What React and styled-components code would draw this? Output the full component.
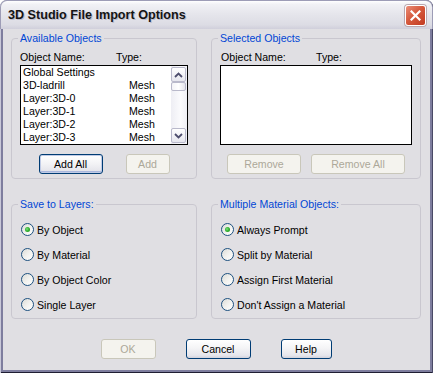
import React from 'react';
import styled, { createGlobalStyle } from 'styled-components';

const Global = createGlobalStyle`
  html, body { margin: 0; padding: 0; background: #ffffff; }
  body { font-family: "Liberation Sans", Arial, sans-serif; }
  * { box-sizing: border-box; }
`;

const FS = '10.6px';

const Window = styled.div`
  width: 433px;
  height: 373px;
  display: flex;
  flex-direction: column;
  border-radius: 7px 7px 0 0;
  overflow: hidden;
  background: #7e7d9e;
  box-shadow: inset 1px 0 0 #c9c8d8, inset -1px 0 0 #4a4966, inset 0 -1px 0 #1f1e33;
`;

const TitleBar = styled.div`
  height: 29px;
  flex: none;
  display: flex;
  align-items: center;
  justify-content: space-between;
  padding: 0 6px 0 7px;
  border: 1px solid #9d9cb6;
  border-bottom: none;
  border-radius: 7px 7px 0 0;
  background: linear-gradient(to bottom, #ffffff 0%, #f1f1f5 12%, #e6e6ec 45%, #dcdce4 85%, #d0cfdb 100%);
`;

const Title = styled.span`
  font: bold 12.6px "Liberation Sans", Arial, sans-serif;
  color: #141414;
  text-shadow: 1px 1px 0 #bdbccb;
`;

const CloseButton = styled.div`
  width: 21px;
  height: 21px;
  border: 1px solid #ffffff;
  border-radius: 3px;
  display: flex;
  align-items: center;
  justify-content: center;
  background: linear-gradient(135deg, #ea8d78 0%, #d65a3e 45%, #c23a20 100%);
  box-shadow: 0 0 0 1px #b9a8b0;
`;

const Body = styled.div`
  flex: 1;
  margin: 0 3px 3px 3px;
  background: #e0dfe3;
  padding: 3px 9px 0 8px;
  display: flex;
  flex-direction: column;
  font-size: ${FS};
  color: #000;
`;

const Grid = styled.div`
  display: grid;
  grid-template-columns: 186px 210px;
  grid-template-rows: 147px 121px;
  column-gap: 14px;
  row-gap: 19px;
`;

const Group = styled.fieldset`
  margin: 0;
  min-width: 0;
  border: 1px solid #c9c7cf;
  border-radius: 4px;
  padding: ${p => p.$pad || '6px 8px 4px 8px'};
  display: flex;
  flex-direction: column;
`;

const Legend = styled.legend`
  margin-left: -2px;
  padding: 0 2px;
  font-size: ${FS};
  line-height: 13px;
  color: #0046d5;
`;

const Header = styled.div`
  display: flex;
  height: 13px;
  line-height: 13px;
  margin-left: ${p => p.$indent || 0}px;
`;

const HeaderCell = styled.span`
  width: ${p => p.$w || 'auto'};
  flex: none;
`;

const ListBox = styled.div`
  margin-top: 1px;
  height: 80px;
  width: ${p => p.$w}px;
  border: 1px solid #000000;
  background: #ffffff;
  display: flex;
`;

const Items = styled.div`
  flex: 1;
  padding: 0 0 0 2px;
  display: flex;
  flex-direction: column;
`;

const Item = styled.div`
  display: flex;
  height: 13px;
  line-height: 13px;
  white-space: nowrap;
`;

const ItemName = styled.span`
  width: 106px;
  flex: none;
`;

const Scrollbar = styled.div`
  width: 16px;
  flex: none;
  padding: 1px 1px 1px 0;
  display: flex;
  flex-direction: column;
  background: linear-gradient(to right, #eeeef4, #fbfbfd 60%, #f0f0f5);
`;

const ScrollButton = styled.div`
  height: 15px;
  border: 1px solid #b9b9cb;
  border-radius: 2px;
  background: linear-gradient(to bottom, #ffffff, #e6e6ee);
  display: flex;
  align-items: center;
  justify-content: center;
`;

const Thumb = styled.div`
  height: 9px;
  border: 1px solid #b9b9cb;
  border-radius: 2px;
  background: linear-gradient(to right, #f3f3f7, #ffffff 50%, #e4e4ec);
`;

const Track = styled.div`
  flex: 1;
`;

const ButtonRow = styled.div`
  display: flex;
  justify-content: center;
  gap: ${p => p.$gap}px;
  margin-top: ${p => p.$top || 9}px;
`;

const Button = styled.div`
  width: ${p => p.$w}px;
  height: 20px;
  display: flex;
  align-items: center;
  justify-content: center;
  font-size: ${FS};
  border-radius: 3px;
  border: 1px solid ${p => (p.$disabled ? '#c9c7ba' : '#003c74')};
  color: ${p => (p.$disabled ? '#aca899' : '#000000')};
  background: ${p =>
    p.$disabled
      ? '#f4f3ee'
      : 'linear-gradient(to bottom, #ffffff 0%, #f4f4f6 45%, #e6e6ec 85%, #d2d2dc 100%)'};
  box-shadow: ${p => (p.$default ? 'inset 0 0 0 1px #c0cbe6, inset 0 -2px 0 #a9b6dc' : 'none')};
`;

const RadioList = styled.div`
  display: flex;
  flex-direction: column;
`;

const RadioRow = styled.div`
  height: 25px;
  display: flex;
  align-items: center;
  gap: 3px;
  padding-left: 1px;
  white-space: nowrap;
`;

const RadioCircle = styled.span`
  width: 13px;
  height: 13px;
  flex: none;
  border-radius: 50%;
  border: 1px solid #1c5180;
  background: linear-gradient(135deg, #dcdcd7 0%, #f3f3f0 55%, #ffffff 100%);
  display: flex;
  align-items: center;
  justify-content: center;
  &::after {
    content: '';
    width: 5px;
    height: 5px;
    border-radius: 50%;
    background: radial-gradient(circle at 40% 40%, #7fe07f 0%, #2fb02f 50%, #1a8c1a 100%);
    display: ${p => (p.$checked ? 'block' : 'none')};
  }
`;

const Footer = styled.div`
  display: flex;
  justify-content: center;
  gap: 30px;
  margin-top: 20px;
`;

const Chevron = ({ up }) => (
  <svg width="9" height="6" viewBox="0 0 9 6">
    <path
      d={up ? 'M1 5 L4.5 1.5 L8 5' : 'M1 1 L4.5 4.5 L8 1'}
      fill="none"
      stroke="#4d4d6d"
      strokeWidth="1.8"
    />
  </svg>
);

const Radio = ({ label, checked }) => (
  <RadioRow>
    <RadioCircle $checked={checked} />
    <span>{label}</span>
  </RadioRow>
);

const items = [
  ['Global Settings', ''],
  ['3D-ladrill', 'Mesh'],
  ['Layer:3D-0', 'Mesh'],
  ['Layer:3D-1', 'Mesh'],
  ['Layer:3D-2', 'Mesh'],
  ['Layer:3D-3', 'Mesh'],
];

export default function App() {
  return (
    <>
      <Global />
      <Window>
        <TitleBar>
          <Title>3D Studio File Import Options</Title>
          <CloseButton>
            <svg width="11" height="11" viewBox="0 0 11 11">
              <path d="M1.5 1.5 L9.5 9.5 M9.5 1.5 L1.5 9.5" stroke="#ffffff" strokeWidth="2.2" strokeLinecap="square" />
            </svg>
          </CloseButton>
        </TitleBar>
        <Body>
          <Grid>
            <Group>
              <Legend>Available Objects</Legend>
              <Header>
                <HeaderCell $w="96px">Object Name:</HeaderCell>
                <HeaderCell>Type:</HeaderCell>
              </Header>
              <ListBox $w={168}>
                <Items>
                  {items.map(([n, t]) => (
                    <Item key={n}>
                      <ItemName>{n}</ItemName>
                      <span>{t}</span>
                    </Item>
                  ))}
                </Items>
                <Scrollbar>
                  <ScrollButton>
                    <Chevron up />
                  </ScrollButton>
                  <Thumb />
                  <Track />
                  <ScrollButton>
                    <Chevron />
                  </ScrollButton>
                </Scrollbar>
              </ListBox>
              <ButtonRow $gap={23}>
                <Button $w={64} $default>Add All</Button>
                <Button $w={44} $disabled>Add</Button>
              </ButtonRow>
            </Group>
            <Group>
              <Legend>Selected Objects</Legend>
              <Header $indent={1}>
                <HeaderCell $w="95px">Object Name:</HeaderCell>
                <HeaderCell>Type:</HeaderCell>
              </Header>
              <ListBox $w={192} />
              <ButtonRow $gap={10}>
                <Button $w={74} $disabled>Remove</Button>
                <Button $w={94} $disabled>Remove All</Button>
              </ButtonRow>
            </Group>
            <Group $pad="6px 8px 0 8px">
              <Legend>Save to Layers:</Legend>
              <RadioList>
                <Radio label="By Object" checked />
                <Radio label="By Material" />
                <Radio label="By Object Color" />
                <Radio label="Single Layer" />
              </RadioList>
            </Group>
            <Group $pad="6px 8px 0 8px">
              <Legend>Multiple Material Objects:</Legend>
              <RadioList>
                <Radio label="Always Prompt" checked />
                <Radio label="Split by Material" />
                <Radio label="Assign First Material" />
                <Radio label="Don't Assign a Material" />
              </RadioList>
            </Group>
          </Grid>
          <Footer>
            <Button $w={55} $disabled>OK</Button>
            <Button $w={65}>Cancel</Button>
            <Button $w={51}>Help</Button>
          </Footer>
        </Body>
      </Window>
    </>
  );
}
